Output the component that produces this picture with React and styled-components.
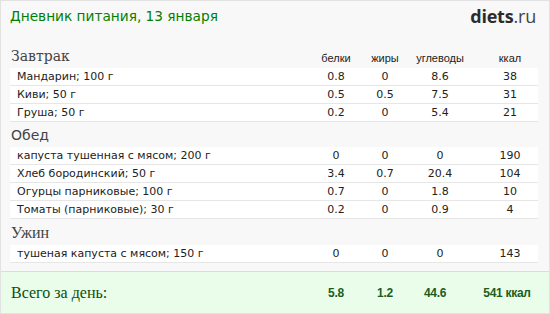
import React from "react";
import styled, { createGlobalStyle } from "styled-components";

const GlobalStyle = createGlobalStyle`
  html, body {
    margin: 0;
    padding: 0;
    background: #fff;
  }
`;

const Page = styled.div`
  width: 550px;
  height: 314px;
  box-sizing: border-box;
  background: #f8f8f8;
  border: 1px solid #e2e2e2;
  display: flex;
  flex-direction: column;
  overflow: hidden;
`;

const Header = styled.div`
  display: flex;
  justify-content: space-between;
  align-items: flex-start;
  padding: 5px 13px 0 9px;
  height: 33px;
`;

const Title = styled.h1`
  margin: 0;
  font-family: "DejaVu Sans", Verdana, sans-serif;
  font-weight: normal;
  font-size: 13.7px;
  line-height: 20px;
  color: #008000;
`;

const Logo = styled.div`
  font-family: "Open Sans", sans-serif;
  font-size: 18px;
  line-height: 20px;
  color: #333;
  letter-spacing: -0.2px;

  b {
    font-weight: 700;
    color: #2c2c2c;
  }
  span {
    font-weight: 400;
    color: #444;
  }
`;

const Content = styled.div`
  padding: 0 11px 0 9px;
  flex: 1;
`;

const cols = "301px 50px 48px 62px 66px";

const SectionHead = styled.div`
  display: grid;
  grid-template-columns: ${cols};
  align-items: end;
  height: ${(p) => p.$height}px;
  padding-bottom: 3px;
  box-sizing: border-box;
`;

const SectionTitle = styled.div`
  font-family: ${(p) =>
    p.$font === "serif"
      ? '"Liberation Serif", serif'
      : p.$font === "slab"
      ? '"DejaVu Serif", serif'
      : '"DejaVu Sans", sans-serif'};
  font-size: ${(p) => (p.$font === "serif" ? 16 : 14)}px;
  color: #444;
  padding-left: 1px;
  line-height: 18px;
`;

const ColLabel = styled.div`
  font-family: "Liberation Sans", Arial, sans-serif;
  font-size: 11px;
  color: #222;
  text-align: center;
  padding-left: ${(p) => p.$shift || 0}px;
  line-height: 14px;
`;

const Row = styled.div`
  display: grid;
  grid-template-columns: ${cols};
  height: 17px;
  align-items: center;
  background: #fff;
  border-bottom: 1px solid #e6e6e6;
  font-family: "DejaVu Sans", Verdana, sans-serif;
  font-size: 11px;
  color: #222;
`;

const Name = styled.div`
  padding-left: 7px;
  white-space: nowrap;
`;

const Cell = styled.div`
  text-align: center;
  padding-left: ${(p) => p.$shift || 0}px;
`;

const Total = styled.div`
  margin-top: auto;
  height: 41px;
  background: #eafdea;
  border-top: 1px solid #dcdcdc;
  display: grid;
  grid-template-columns: 301px 50px 48px 52px 76px;
  align-items: center;
  padding: 0 11px 0 9px;
`;

const TotalLabel = styled.div`
  font-family: "Liberation Serif", serif;
  font-size: 16px;
  color: #0b4f0b;
  padding-left: 1px;
`;

const TotalValue = styled.div`
  font-family: "Liberation Sans", Arial, sans-serif;
  font-weight: bold;
  font-size: 12px;
  color: #1c5e1c;
  text-align: center;
  letter-spacing: -0.3px;
  padding-left: ${(p) => p.$shift || 0}px;
`;

const sections = [
  {
    title: "Завтрак",
    font: "slab",
    height: 29,
    labels: true,
    rows: [
      ["Мандарин; 100 г", "0.8", "0", "8.6", "38"],
      ["Киви; 50 г", "0.5", "0.5", "7.5", "31"],
      ["Груша; 50 г", "0.2", "0", "5.4", "21"],
    ],
  },
  {
    title: "Обед",
    font: "sans",
    height: 25,
    rows: [
      ["капуста тушенная с мясом; 200 г", "0", "0", "0", "190"],
      ["Хлеб бородинский; 50 г", "3.4", "0.7", "20.4", "104"],
      ["Огурцы парниковые; 100 г", "0.7", "0", "1.8", "10"],
      ["Томаты (парниковые); 30 г", "0.2", "0", "0.9", "4"],
    ],
  },
  {
    title: "Ужин",
    font: "serif",
    height: 26,
    rows: [["тушеная капуста с мясом; 150 г", "0", "0", "0", "143"]],
  },
];

export default function App() {
  return (
    <>
      <GlobalStyle />
      <Page>
        <Header>
          <Title>Дневник питания, 13 января</Title>
          <Logo>
            <b>diets</b>
            <span>.ru</span>
          </Logo>
        </Header>
        <Content>
          {sections.map((s) => (
            <React.Fragment key={s.title}>
              <SectionHead $height={s.height}>
                <SectionTitle $font={s.font}>{s.title}</SectionTitle>
                {s.labels && (
                  <>
                    <ColLabel>белки</ColLabel>
                    <ColLabel>жиры</ColLabel>
                    <ColLabel>углеводы</ColLabel>
                    <ColLabel $shift={12}>ккал</ColLabel>
                  </>
                )}
              </SectionHead>
              {s.rows.map((r) => (
                <Row key={r[0]}>
                  <Name>{r[0]}</Name>
                  <Cell>{r[1]}</Cell>
                  <Cell>{r[2]}</Cell>
                  <Cell>{r[3]}</Cell>
                  <Cell $shift={12}>{r[4]}</Cell>
                </Row>
              ))}
            </React.Fragment>
          ))}
        </Content>
        <Total>
          <TotalLabel>Всего за день:</TotalLabel>
          <TotalValue>5.8</TotalValue>
          <TotalValue>1.2</TotalValue>
          <TotalValue>44.6</TotalValue>
          <TotalValue $shift={16}>541 ккал</TotalValue>
        </Total>
      </Page>
    </>
  );
}
